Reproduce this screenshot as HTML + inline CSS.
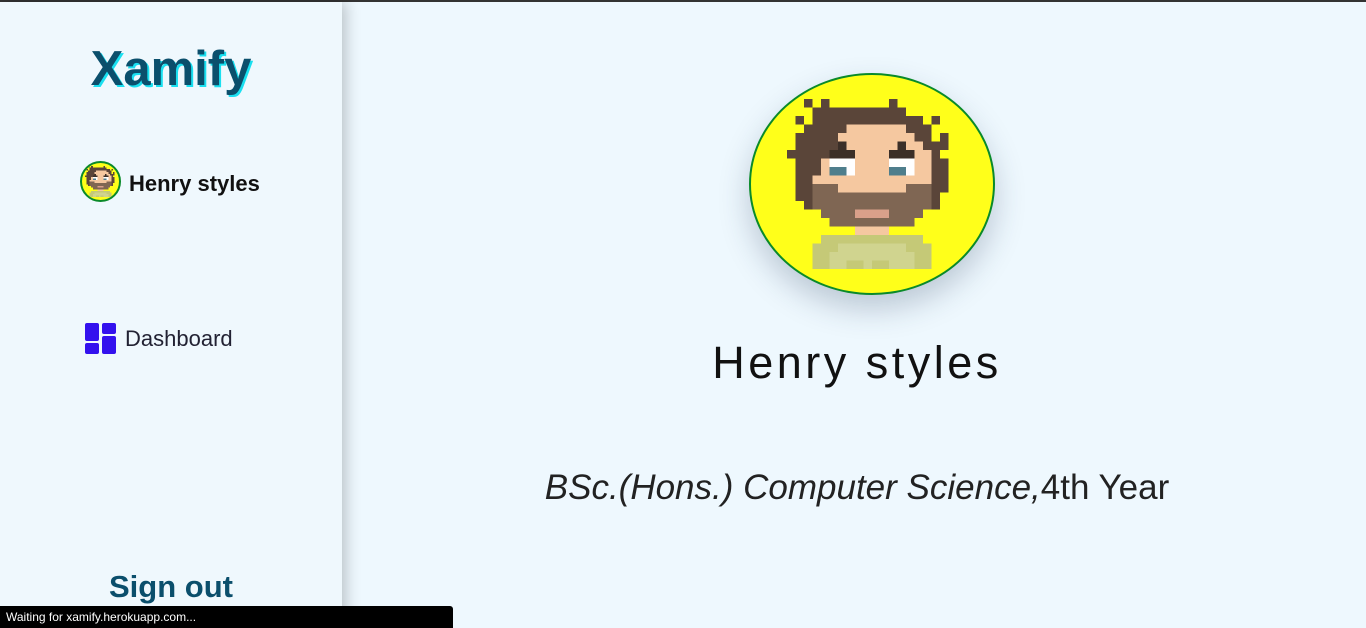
<!DOCTYPE html>
<html><head><meta charset="utf-8"><style>
*{margin:0;padding:0;box-sizing:border-box}
body{width:1366px;height:628px;overflow:hidden;background:#eef8fe;font-family:"Liberation Sans",sans-serif;position:relative}
.top{position:absolute;left:0;top:0;width:1366px;height:2px;background:#333}
.side{position:absolute;left:0;top:2px;width:342px;height:626px;background:#eff8fd;box-shadow:4px 0 14px rgba(0,0,0,.22)}
.logo{position:absolute;left:0;width:342px;top:39px;text-align:center;font-size:49px;font-weight:bold;color:#0b4f6c;text-shadow:2px 2px 0 #19e0f0}
.sav{position:absolute;left:80px;top:161px;width:41px;height:41px;border-radius:50%;background:#ffff1a;border:2px solid #0a8a2a;overflow:hidden}
.sname{position:absolute;left:129px;top:171px;font-size:22px;font-weight:bold;color:#111}
.dash{position:absolute;left:125px;top:326px;font-size:22px;color:#223}
.so{position:absolute;left:0;width:342px;top:569px;text-align:center;font-size:31px;font-weight:bold;color:#0b4f6c}
.big{position:absolute;left:749px;top:73px;width:246px;height:222px;border-radius:50%;background:#ffff1a;border:2px solid #0a8a2a;box-shadow:0 14px 30px rgba(40,60,90,.25);overflow:hidden}
.name{position:absolute;left:557px;width:600px;top:337px;text-align:center;font-size:45px;letter-spacing:3.5px;color:#111}
.sub{position:absolute;left:457px;width:800px;top:468px;text-align:center;font-size:35px;color:#222}
.status{position:absolute;left:0;top:606px;width:453px;height:22px;background:#000;color:#fff;font-size:12px;padding:4px 0 0 6px;border-top-right-radius:3px}
</style></head><body>
<svg width="0" height="0" style="position:absolute"><defs><symbol id="face" viewBox="0 0 20 20" preserveAspectRatio="none" shape-rendering="crispEdges">
<g fill="#5a4539">
<rect x="2" y="0" width="1" height="1"/><rect x="4" y="0" width="1" height="1"/><rect x="12" y="0" width="1" height="1"/>
<rect x="3" y="1" width="11" height="1"/>
<rect x="1" y="2" width="1" height="1"/><rect x="3" y="2" width="13" height="1"/><rect x="17" y="2" width="1" height="1"/>
<rect x="2" y="3" width="5" height="1"/><rect x="14" y="3" width="3" height="1"/>
<rect x="1" y="4" width="5" height="1"/><rect x="15" y="4" width="2" height="1"/><rect x="18" y="4" width="1" height="1"/>
<rect x="1" y="5" width="5" height="1"/><rect x="16" y="5" width="3" height="1"/>
<rect x="0" y="6" width="5" height="1"/><rect x="17" y="6" width="1" height="1"/>
<rect x="1" y="7" width="3" height="2"/><rect x="17" y="7" width="2" height="2"/>
<rect x="1" y="9" width="2" height="3"/><rect x="17" y="9" width="2" height="2"/>
<rect x="17" y="11" width="1" height="2"/><rect x="2" y="12" width="1" height="1"/>
</g>
<g fill="#f5c8a0">
<rect x="7" y="3" width="7" height="1"/><rect x="6" y="4" width="9" height="1"/>
<rect x="7" y="5" width="6" height="1"/><rect x="14" y="5" width="2" height="1"/>
<rect x="8" y="6" width="4" height="1"/><rect x="15" y="6" width="2" height="1"/>
<rect x="4" y="7" width="1" height="2"/><rect x="8" y="7" width="4" height="2"/><rect x="15" y="7" width="2" height="2"/>
<rect x="3" y="9" width="14" height="1"/><rect x="6" y="10" width="8" height="1"/>
<rect x="8" y="15" width="4" height="1"/>
</g>
<g fill="#3b2f28"><rect x="6" y="5" width="1" height="1"/><rect x="13" y="5" width="1" height="1"/><rect x="5" y="6" width="3" height="1"/><rect x="12" y="6" width="3" height="1"/></g>
<g fill="#fff"><rect x="5" y="7" width="3" height="2"/><rect x="12" y="7" width="3" height="2"/></g>
<g fill="#4f7e8c"><rect x="5" y="8" width="2" height="1"/><rect x="12" y="8" width="2" height="1"/></g>
<g fill="#7f6653">
<rect x="3" y="10" width="3" height="1"/><rect x="14" y="10" width="3" height="1"/>
<rect x="3" y="11" width="14" height="2"/><rect x="4" y="13" width="12" height="1"/><rect x="5" y="14" width="10" height="1"/>
</g>
<rect x="8" y="13" width="4" height="1" fill="#d9a08a"/>
<g fill="#c5c977"><rect x="4" y="16" width="12" height="1"/><rect x="3" y="17" width="14" height="3"/></g>
<g fill="#d0d48f"><rect x="6" y="17" width="8" height="1"/><rect x="5" y="18" width="10" height="2"/></g>
<g fill="#c5c977"><rect x="7" y="19" width="2" height="1"/><rect x="10" y="19" width="2" height="1"/></g>
</symbol></defs></svg>
<div class="top"></div>
<div class="side">
<div class="logo">Xamify</div>
</div>
<div class="sav"><svg style="position:absolute;left:3px;top:3px" width="31" height="31"><use href="#face" width="31" height="31"/></svg></div>
<div class="sname">Henry styles</div>
<svg style="position:absolute;left:85px;top:323px" width="31" height="31"><rect x="0" y="0" width="14" height="18" rx="2" fill="#3311ee"/><rect x="0" y="20" width="14" height="11" rx="2" fill="#3311ee"/><rect x="17" y="0" width="14" height="11" rx="2" fill="#3311ee"/><rect x="17" y="13" width="14" height="18" rx="2" fill="#3311ee"/></svg>
<div class="dash">Dashboard</div>
<div class="so">Sign out</div>
<div class="big"><svg style="position:absolute;left:36px;top:24px" width="170" height="170"><use href="#face" width="170" height="170"/></svg></div>
<div class="name">Henry styles</div>
<div class="sub"><i>BSc.(Hons.) Computer Science,</i>4th Year</div>
<div class="status">Waiting for xamify.herokuapp.com...</div>
</body></html>
